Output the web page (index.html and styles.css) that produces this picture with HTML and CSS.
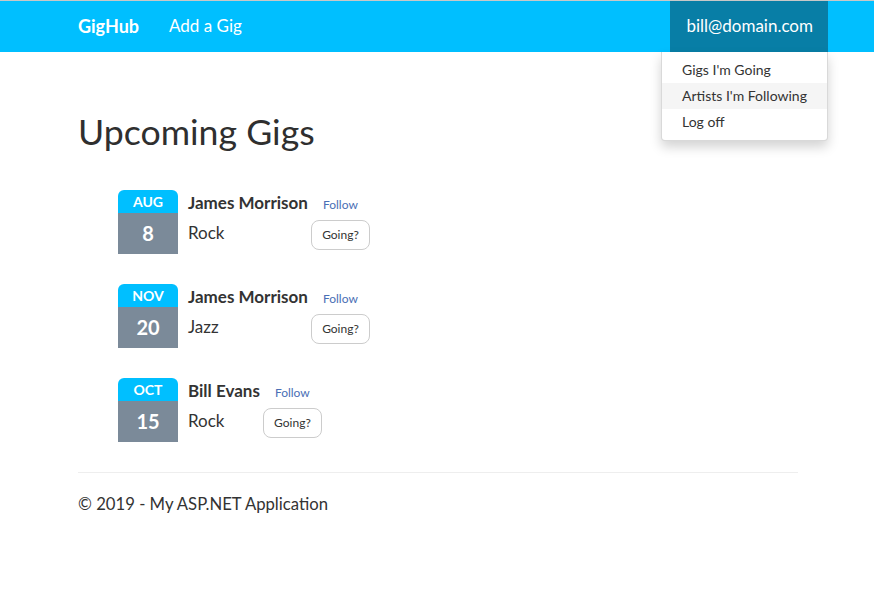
FILE: index.html
```html
<!DOCTYPE html>
<html>
<head>
<meta charset="utf-8">
<title>GigHub</title>
<link rel="stylesheet" href="styles.css">
</head>
<body>
<nav class="navbar">
  <div class="container nav-inner">
    <div class="nav-left">
      <a class="brand" href="#">GigHub</a>
      <a class="nav-link" href="#">Add a Gig</a>
    </div>
    <div class="nav-right">
      <a class="nav-link user" href="#">bill@domain.com</a>
      <ul class="dropdown">
        <li><a href="#">Gigs I'm Going</a></li>
        <li class="active"><a href="#">Artists I'm Following</a></li>
        <li><a href="#">Log off</a></li>
      </ul>
    </div>
  </div>
</nav>
<main class="container body-content">
  <h1 class="title">Upcoming Gigs</h1>
  <ul class="gigs">
    <li class="gig">
      <div class="date">
        <div class="month">AUG</div>
        <div class="day">8</div>
      </div>
      <div class="details">
        <div class="row1">
          <span class="artist">James Morrison</span>
          <button class="btn-follow">Follow</button>
        </div>
        <div class="row2">
          <span class="genre">Rock</span>
          <button class="btn-going">Going?</button>
        </div>
      </div>
    </li>
    <li class="gig">
      <div class="date">
        <div class="month">NOV</div>
        <div class="day">20</div>
      </div>
      <div class="details">
        <div class="row1">
          <span class="artist">James Morrison</span>
          <button class="btn-follow">Follow</button>
        </div>
        <div class="row2">
          <span class="genre">Jazz</span>
          <button class="btn-going">Going?</button>
        </div>
      </div>
    </li>
    <li class="gig">
      <div class="date">
        <div class="month">OCT</div>
        <div class="day">15</div>
      </div>
      <div class="details">
        <div class="row1">
          <span class="artist">Bill Evans</span>
          <button class="btn-follow">Follow</button>
        </div>
        <div class="row2">
          <span class="genre">Rock</span>
          <button class="btn-going">Going?</button>
        </div>
      </div>
    </li>
  </ul>
  <hr class="rule">
  <footer class="footer">
    <p>&copy; 2019 - My ASP.NET Application</p>
  </footer>
</main>
</body>
</html>
```
FILE: styles.css
```css
* { box-sizing: border-box; }
html, body { margin: 0; padding: 0; }
body {
  font-family: Lato, "Open Sans", sans-serif;
  font-size: 16px;
  line-height: 1.42857;
  color: #2c3e50;
  background: #fff;
}
a { text-decoration: none; }
.container {
  width: 722px;
  padding-left: 2px;
  margin: 0 auto;
}
.navbar {
  background: #00bfff;
  border-top: 1px solid #c8c8c8;
  height: 52px;
}
.nav-inner {
  display: flex;
  justify-content: space-between;
  height: 51px;
}
.nav-left { display: flex; align-items: stretch; }
.brand, .nav-link {
  color: #fff;
  font-size: 17px;
  display: flex;
  align-items: center;
  height: 51px;
}
.brand { font-weight: bold; font-size: 18px; margin-right: 30px; }
.nav-right { position: relative; margin-right: -30px; }
.user {
  background: #087ea6;
  padding: 0 15px 0 16px;
  height: 51px;
}
.dropdown {
  position: absolute;
  top: 51px;
  right: 0;
  width: 167px;
  margin: 0;
  padding: 5px 0;
  list-style: none;
  background: #fff;
  border: 1px solid rgba(0,0,0,0.15);
  border-top: 0;
  border-radius: 0 0 4px 4px;
  box-shadow: 0 6px 12px rgba(0,0,0,0.175);
  z-index: 10;
}
.dropdown a {
  display: block;
  padding: 3px 20px;
  font-size: 14px;
  line-height: 20px;
  color: #333;
  white-space: nowrap;
}
.dropdown .active a { background: #f5f5f5; }
.title {
  font-size: 35.7px;
  font-weight: 400;
  line-height: 1.1;
  margin: 60px 0 0;
  color: #2f2f2f;
}
.gigs {
  list-style: none;
  margin: 39px 0 0;
  padding: 0 0 0 40px;
}
.gig {
  display: flex;
  align-items: flex-start;
  margin-bottom: 30px;
}
.date {
  width: 60px;
  text-align: center;
  color: #fff;
  font-weight: bold;
}
.month {
  background: #00bfff;
  border-radius: 6px 6px 0 0;
  font-size: 14px;
  height: 23px;
  line-height: 23px;
}
.day {
  background: #7b8a99;
  font-size: 20px;
  height: 41px;
  line-height: 41px;
}
.details { margin-left: 10px; }
.row1 {
  display: flex;
  align-items: baseline;
  height: 30px;
  padding-top: 1px;
}
.artist { font-weight: bold; font-size: 17px; color: #333; }
.btn-follow {
  font-family: inherit;
  font-size: 12px;
  color: #4a6fb5;
  background: none;
  border: 0;
  padding: 0 12px 0 15px;
}
.row2 {
  display: flex;
  justify-content: space-between;
  align-items: baseline;
}
.genre { font-size: 17px; color: #333; }
.btn-going {
  font-family: inherit;
  font-size: 12px;
  line-height: 18px;
  color: #333;
  background: #fff;
  border: 1px solid #ccc;
  border-radius: 8px;
  padding: 5px 10px;
}
.rule {
  border: 0;
  border-top: 1px solid #eee;
  margin: 0;
}
.footer p {
  margin: 20px 0 0;
  font-size: 16.7px;
  color: #333;
}
```
